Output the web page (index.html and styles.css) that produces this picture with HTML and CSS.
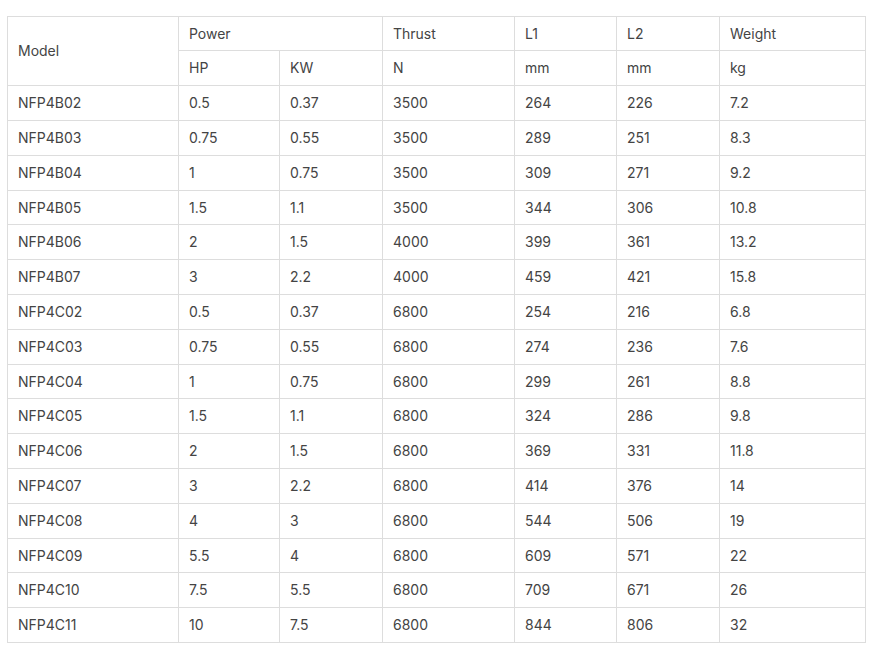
FILE: index.html
```html
<!DOCTYPE html>
<html>
<head>
<meta charset="utf-8">
<link rel="stylesheet" href="styles.css">
</head>
<body>
<table class="spec">
  <colgroup>
    <col class="c1"><col class="c2"><col class="c3"><col class="c4"><col class="c5"><col class="c6"><col class="c7">
  </colgroup>
  <thead>
    <tr class="h1"><th rowspan="2">Model</th><th colspan="2">Power</th><th>Thrust</th><th>L1</th><th>L2</th><th>Weight</th></tr>
    <tr class="h2"><th>HP</th><th>KW</th><th>N</th><th>mm</th><th>mm</th><th>kg</th></tr>
  </thead>
  <tbody>
    <tr><td>NFP4B02</td><td>0.5</td><td>0.37</td><td>3500</td><td>264</td><td>226</td><td>7.2</td></tr>
    <tr><td>NFP4B03</td><td>0.75</td><td>0.55</td><td>3500</td><td>289</td><td>251</td><td>8.3</td></tr>
    <tr><td>NFP4B04</td><td>1</td><td>0.75</td><td>3500</td><td>309</td><td>271</td><td>9.2</td></tr>
    <tr><td>NFP4B05</td><td>1.5</td><td>1.1</td><td>3500</td><td>344</td><td>306</td><td>10.8</td></tr>
    <tr><td>NFP4B06</td><td>2</td><td>1.5</td><td>4000</td><td>399</td><td>361</td><td>13.2</td></tr>
    <tr><td>NFP4B07</td><td>3</td><td>2.2</td><td>4000</td><td>459</td><td>421</td><td>15.8</td></tr>
    <tr><td>NFP4C02</td><td>0.5</td><td>0.37</td><td>6800</td><td>254</td><td>216</td><td>6.8</td></tr>
    <tr><td>NFP4C03</td><td>0.75</td><td>0.55</td><td>6800</td><td>274</td><td>236</td><td>7.6</td></tr>
    <tr><td>NFP4C04</td><td>1</td><td>0.75</td><td>6800</td><td>299</td><td>261</td><td>8.8</td></tr>
    <tr><td>NFP4C05</td><td>1.5</td><td>1.1</td><td>6800</td><td>324</td><td>286</td><td>9.8</td></tr>
    <tr><td>NFP4C06</td><td>2</td><td>1.5</td><td>6800</td><td>369</td><td>331</td><td>11.8</td></tr>
    <tr><td>NFP4C07</td><td>3</td><td>2.2</td><td>6800</td><td>414</td><td>376</td><td>14</td></tr>
    <tr><td>NFP4C08</td><td>4</td><td>3</td><td>6800</td><td>544</td><td>506</td><td>19</td></tr>
    <tr><td>NFP4C09</td><td>5.5</td><td>4</td><td>6800</td><td>609</td><td>571</td><td>22</td></tr>
    <tr><td>NFP4C10</td><td>7.5</td><td>5.5</td><td>6800</td><td>709</td><td>671</td><td>26</td></tr>
    <tr><td>NFP4C11</td><td>10</td><td>7.5</td><td>6800</td><td>844</td><td>806</td><td>32</td></tr>
  </tbody>
</table>
</body>
</html>
```
FILE: styles.css
```css
html, body {
  margin: 0;
  background: #fff;
}
body {
  padding: 16px 7px 0 7px;
  font-family: "Inter", "Noto Sans", sans-serif;
  font-size: 14px;
  color: #444;
}
.spec {
  border-collapse: collapse;
  table-layout: fixed;
  width: 858px;
}
.c1 { width: 171px; }
.c2 { width: 101px; }
.c3 { width: 103px; }
.c4 { width: 132px; }
.c5 { width: 102px; }
.c6 { width: 103px; }
.c7 { width: 146px; }
.spec th, .spec td {
  border: 1px solid #ddd;
  padding: 0 10px;
  text-align: left;
  vertical-align: middle;
  font-weight: 400;
  line-height: 20px;
}
.spec .h1 { height: 34.3px; }
.spec .h2 { height: 35px; }
.spec tbody tr { height: 34.8px; }
```
